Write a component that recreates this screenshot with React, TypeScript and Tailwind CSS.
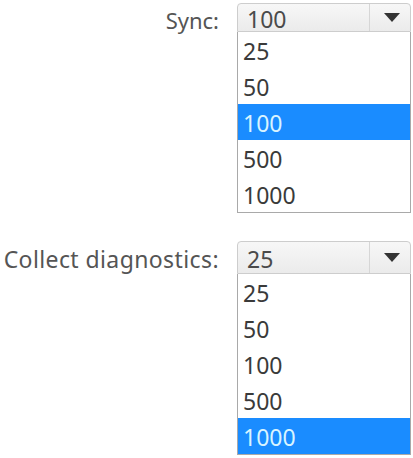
import React from "react";

type DDProps = { value: string; options: string[]; selected: string; comboH: string };

function Dropdown({ value, options, selected, comboH }: DDProps) {
  return (
    <div className="w-[174px] flex flex-col text-[23px]">
      <div
        className={`${comboH} flex items-stretch border border-[#cdcdcd] rounded-t-[4px] bg-gradient-to-b from-[#f7f7f7] to-[#ebebeb]`}
      >
        <div className="flex-1 pl-[9px] flex items-center text-[#4a4a4a] leading-none pt-[4px]">{value}</div>
        <div className="w-[41px] border-l border-[#d6d6d6] flex items-center justify-center pl-[3px]">
          <svg width="16" height="9" viewBox="0 0 16 9">
            <polygon points="0,0 16,0 8,9" fill="#333" />
          </svg>
        </div>
      </div>
      <div className="border border-t-0 border-[#a9a9a9] bg-white">
        {options.map((o) => (
          <div
            key={o}
            className={`h-[36px] pl-[5px] flex items-center pt-[3px] leading-none ${
              o === selected ? "bg-[#1a8cff] text-[#d8f4ff]" : "text-[#3a3a3a]"
            }`}
          >
            {o}
          </div>
        ))}
      </div>
    </div>
  );
}

export default function App() {
  const opts = ["25", "50", "100", "500", "1000"];
  return (
    <div
      className="w-[413px] h-[458px] bg-white overflow-hidden text-[22px]"
      style={{ fontFamily: '"Noto Sans", "Open Sans", sans-serif' }}
    >
      <div className="flex pt-[3px]">
        <div className="w-[237px] pr-[18px] text-right text-[#555] leading-none pt-[6px]">Sync:</div>
        <Dropdown value="100" options={opts} selected="100" comboH="h-[29px]" />
      </div>
      <div className="flex mt-[28px]">
        <div className="w-[237px] pr-[18px] text-right text-[#555] leading-none pt-[7px] text-[23px] tracking-[0.4px] whitespace-nowrap">
          Collect diagnostics:
        </div>
        <Dropdown value="25" options={opts} selected="1000" comboH="h-[33px]" />
      </div>
    </div>
  );
}
